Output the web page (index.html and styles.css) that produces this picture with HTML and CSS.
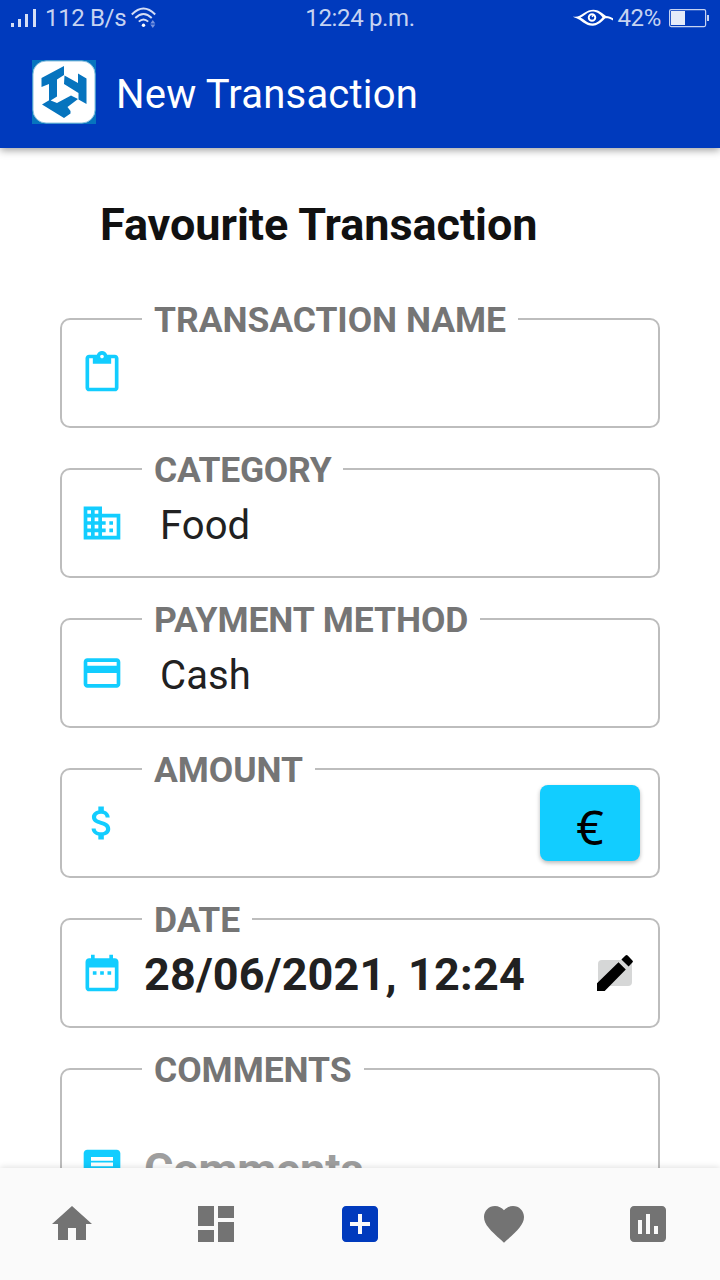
FILE: index.html
```
<!DOCTYPE html>
<html lang="en">
<head>
<meta charset="utf-8">
<title>New Transaction</title>
<link rel="stylesheet" href="styles.css">
</head>
<body>
<div class="screen">
  <header class="top">
    <div class="status">
      <div class="status-left">
        <svg class="signal" width="26" height="20" viewBox="0 0 26 20"><path d="M0 15h3v4H0zM7 11h3v8H7zM14 6h3v13h-3zM22 1h3v18h-3z"/></svg>
        <span class="speed">112 B/s</span>
        <svg class="wifi" width="26" height="22" viewBox="0 0 26 22"><g fill="none" stroke="#d5def5" stroke-width="1.9"><path d="M.8 7.5Q12.500-4.500 24.200 7.500"/><path d="M4.300 11Q12.500 3 20.700 11"/><path d="M7.800 14.600Q12.500 10.200 17.200 14.600"/></g><circle cx="12.500" cy="18.200" r="1.700" fill="#fff"/><path d="M19.300 16.500h5L21.800 13zM19.300 17.600h5l-2.500 3.500z" fill="#7793df"/></svg>
      </div>
      <span class="clock">12:24 p.m.</span>
      <div class="status-right">
        <svg class="eye" width="41" height="20" viewBox="0 0 41 20"><path d="M0 8.500C4 9.500 7 8 11 5 17 .5 24 .5 29 5l4 3c3 .2 5 1 7 2.200v2.300c-3-1.800-5-2.300-8-2.100-5 5-8 6.800-12 7.300C13 18 9 13 5 11 3 10 1 9.500 0 8.500zM7.500 9.600C11 11 14 15.500 19.500 15.500c4.500 0 7.500-3 10-6.200C26 5 23 3.500 19 3.500S12 7.300 7.500 9.600z" fill="#fff" fill-rule="evenodd"/><circle cx="19" cy="9.500" r="3.300" fill="none" stroke="#fff" stroke-width="1.900"/><path d="M19 8.800l2-2" stroke="#fff" stroke-width="1.400"/></svg>
        <span class="percent">42%</span>
        <svg class="battery" width="41" height="19" viewBox="0 0 41 19"><rect x=".6" y=".6" width="36" height="17" rx="1.500" fill="none" stroke="#c6d3f1" stroke-width="1.200"/><path d="M2 2h14v14H2z" fill="#e5ebf9"/><path d="M38 6h2v6h-2z" fill="#c6d3f1"/></svg>
      </div>
    </div>
    <div class="appbar">
      <svg class="logo" width="64" height="64" viewBox="0 0 64 64"><path d="M0 0h64v64H0z" fill="#0674be"/><rect x="1" y="1" width="62" height="62" rx="13" fill="#fff" stroke="#8cc0e0" stroke-width="1"/><path fill="#0674be" d="M32 6v9l-7 4.500v17l-8 5V24l-7.500 3v-9zM32.500 15.500L46 23v-9.500l8.500 5V44l-8-4.500V33L32 24zM10 44.500l7.500-4.500 7.500 3L39 35.500l7 3.500-10.500 8 3 4v2.500L32 58z"/></svg>
      <h1 class="app-title">New Transaction</h1>
    </div>
  </header>
  <main class="content">
    <h2 class="heading">Favourite Transaction</h2>
    <form class="fields">
      <div class="field"><label class="label">TRANSACTION NAME</label>
        <svg class="icon" viewBox="0 0 24 24"><path d="M19 2h-4.180C14.400.84 13.300 0 12 0c-1.300 0-2.400.84-2.820 2H5c-1.100 0-2 .9-2 2v16c0 1.100.9 2 2 2h14c1.100 0 2-.9 2-2V4c0-1.100-.9-2-2-2zm-7 0c.55 0 1 .45 1 1s-.45 1-1 1-1-.45-1-1 .45-1 1-1zm7 18H5V4h2v3h10V4h2v16z"/></svg>
      </div>
      <div class="field"><label class="label l-category">CATEGORY</label>
        <svg class="icon" viewBox="0 0 24 24"><path d="M12 7V3H2v18h20V7H12zM6 19H4v-2h2v2zm0-4H4v-2h2v2zm0-4H4V9h2v2zm0-4H4V5h2v2zm4 12H8v-2h2v2zm0-4H8v-2h2v2zm0-4H8V9h2v2zm0-4H8V5h2v2zm10 12h-8v-2h2v-2h-2v-2h2v-2h-2V9h8v10zm-2-8h-2v2h2v-2zm0 4h-2v2h2v-2z"/></svg>
        <span class="value">Food</span>
      </div>
      <div class="field"><label class="label">PAYMENT METHOD</label>
        <svg class="icon" viewBox="0 0 24 24"><path d="M20 4H4c-1.110 0-1.990.89-1.990 2L2 18c0 1.110.89 2 2 2h16c1.110 0 2-.89 2-2V6c0-1.110-.89-2-2-2zm0 14H4v-6h16v6zm0-10H4V6h16v2z"/></svg>
        <span class="value">Cash</span>
      </div>
      <div class="field"><label class="label">AMOUNT</label>
        <svg class="icon" viewBox="0 0 24 24"><path d="M11.800 10.900c-2.270-.59-3-1.200-3-2.150 0-1.090 1.010-1.850 2.700-1.850 1.780 0 2.440.85 2.500 2.100h2.210c-.07-1.720-1.120-3.300-3.210-3.810V3h-3v2.160c-1.940.42-3.500 1.680-3.500 3.610 0 2.310 1.910 3.460 4.700 4.130 2.500.6 3 1.480 3 2.410 0 .69-.49 1.790-2.700 1.790-2.060 0-2.870-.92-2.980-2.100h-2.200c.12 2.190 1.760 3.420 3.680 3.830V21h3v-2.150c1.950-.37 3.500-1.500 3.500-3.550 0-2.840-2.430-3.810-4.700-4.400z"/></svg>
        <button class="currency" type="button">€</button>
      </div>
      <div class="field"><label class="label">DATE</label>
        <svg class="icon" viewBox="0 0 24 24"><path d="M9 11H7v2h2v-2zm4 0h-2v2h2v-2zm4 0h-2v2h2v-2zm2-7h-1V2h-2v2H8V2H6v2H5c-1.110 0-1.990.9-1.990 2L3 20c0 1.100.89 2 2 2h14c1.100 0 2-.9 2-2V6c0-1.100-.9-2-2-2zm0 16H5V9h14v11z"/></svg>
        <span class="date">28/06/2021, 12:24</span>
        <svg class="edit" width="38" height="38" viewBox="0 0 38 38"><rect x="2" y="6" width="34" height="26" rx="4" fill="#d6d7d7"/><path d="M1 29.300V37h7.700L29.800 15.500l-7.300-7.300zM36.400 8.600a1.500 1.500 0 0 0 0-2.200L31.700 1.600a1.500 1.500 0 0 0-2.200 0L25.400 5.400l7.200 7.200z"/></svg>
      </div>
      <div class="field field-tall"><label class="label">COMMENTS</label>
        <svg class="icon" viewBox="0 0 24 24"><path d="M20 2H4c-1.100 0-1.990.9-1.990 2L2 22l4-4h14c1.100 0 2-.9 2-2V4c0-1.100-.9-2-2-2zm-2 12H6v-2h12v2zm0-3H6V9h12v2zm0-3H6V6h12v2z"/></svg>
        <span class="date placeholder">Comments</span>
      </div>
    </form>
  </main>
  <nav class="nav">
    <svg class="nav-icon" viewBox="0 0 24 24"><path d="M10 20v-6h4v6h5v-8h3L12 3 2 12h3v8z"/></svg>
    <svg class="nav-icon" viewBox="0 0 24 24"><path d="M3 13h8V3H3v10zm0 8h8v-6H3v6zm10 0h8V11h-8v10zm0-18v6h8V3h-8z"/></svg>
    <svg class="nav-icon active" viewBox="0 0 24 24"><path d="M19 3H5c-1.110 0-2 .9-2 2v14c0 1.100.89 2 2 2h14c1.100 0 2-.9 2-2V5c0-1.100-.9-2-2-2zm-2 10h-4v4h-2v-4H7v-2h4V7h2v4h4v2z"/></svg>
    <svg class="nav-icon" viewBox="0 0 24 24"><path d="M12 21.350l-1.450-1.320C5.400 15.360 2 12.280 2 8.500 2 5.420 4.420 3 7.500 3c1.740 0 3.410.81 4.500 2.090C13.090 3.810 14.760 3 16.500 3 19.580 3 22 5.420 22 8.500c0 3.780-3.400 6.860-8.550 11.540L12 21.350z"/></svg>
    <svg class="nav-icon" viewBox="0 0 24 24"><path d="M19 3H5c-1.100 0-2 .9-2 2v14c0 1.100.9 2 2 2h14c1.100 0 2-.9 2-2V5c0-1.100-.9-2-2-2zM9 17H7v-7h2v7zm4 0h-2V7h2v10zm4 0h-2v-4h2v4z"/></svg>
  </nav>
</div>
</body>
</html>
```
FILE: styles.css
```
* { box-sizing: border-box; }
body { margin: 0; background: #fff; font-family: Roboto, "Liberation Sans", sans-serif; color: #212121; }
svg { display: block; flex: none; }
.screen { width: 720px; height: 1280px; display: flex; flex-direction: column; overflow: hidden; }
.top { height: 148px; flex: none; background: #003abd; box-shadow: 0 2px 8px rgba(0,0,0,.4); z-index: 1; }
.status { height: 36px; display: grid; grid-template-columns: 1fr auto 1fr; align-items: center; padding: 0 11px; color: #c6d3f1; font-size: 24px; line-height: 36px; letter-spacing: -.35px; }
.status-left, .status-right { display: flex; align-items: center; }
.status-right { justify-content: flex-end; margin-right: -1px; }
.signal { fill: #d5def5; }
.speed { margin-left: 8px; margin-right: 5px; }
.percent { margin: 0 8px 0 3px; }
.appbar { height: 112px; display: flex; align-items: flex-start; padding: 24px 0 0 32px; }
.app-title { margin: 9px 0 0 20px; font-size: 40px; font-weight: 400; line-height: 52px; letter-spacing: .2px; color: #fff; white-space: nowrap; }
.content { flex: 1; min-height: 0; overflow: hidden; padding: 51px 60px 0; }
.heading { margin: 0 0 0 40px; font-size: 45px; line-height: 52px; letter-spacing: -.05px; font-weight: 700; color: #111; white-space: nowrap; }
.fields { margin: 67px 0 0; display: flex; flex-direction: column; gap: 40px; }
.field { position: relative; height: 110px; flex: none; display: flex; align-items: center; border: 2px solid #bdbdbd; border-radius: 10px; padding: 0 18px; }
.field-tall { height: 200px; }
.label { position: absolute; left: 80px; top: -21px; padding: 0 12px; background: #fff; color: #757575; font-size: 35.5px; line-height: 42px; letter-spacing: -.05px; font-weight: 700; white-space: nowrap; }
.l-category { letter-spacing: -.25px; }
.icon { width: 44px; height: 44px; fill: #12cdff; }
.value { margin-left: 36px; padding-top: 6px; font-size: 40px; line-height: 48px; letter-spacing: .1px; }
.date { margin-left: 20px; padding-top: 3px; font-size: 45px; line-height: 52px; letter-spacing: .16px; font-weight: 700; white-space: nowrap; }
.placeholder { color: #9e9e9e; letter-spacing: -.2px; }
.currency { margin-left: auto; width: 100px; height: 76px; padding: 8px 0 0; border: 0; border-radius: 8px; background: #12cdff; box-shadow: 0 2px 4px rgba(0,0,0,.28); color: #000; font-family: "Noto Sans", sans-serif; font-size: 48px; line-height: 68px; }
.edit { margin-left: auto; margin-right: 6px; }
.nav { position: relative; height: 112px; flex: none; display: grid; grid-template-columns: repeat(5, 1fr); align-items: center; justify-items: center; background: #fafafa; box-shadow: 0 -1px 6px rgba(0,0,0,.12); }
.nav-icon { width: 48px; height: 48px; fill: #737373; }
.active { fill: #003abd; }
```
